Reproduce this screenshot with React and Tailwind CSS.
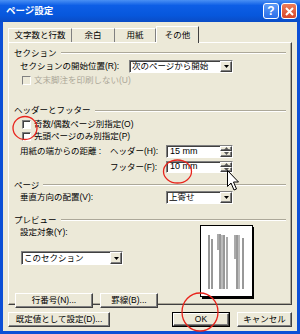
import React from "react"

const sunken =
  "bg-white border border-t-[#808080] border-l-[#808080] border-r-white border-b-white shadow-[inset_1px_1px_0_#404040]"
const raised =
  "bg-[#ece9d8] border border-t-white border-l-white border-r-[#404040] border-b-[#404040] shadow-[inset_-1px_-1px_0_#808080]"

function Group({ label }) {
  return (
    <div className="flex items-center h-[12px] px-[5px]">
      <span>{label}</span>
      <div className="flex-1 ml-[4px] h-[2px] border-t border-t-[#aca899] border-b border-b-white" />
    </div>
  )
}

function Arrow() {
  return (
    <svg width="5" height="3" viewBox="0 0 5 3">
      <path d="M0 0h5L2.5 3z" fill="#000" />
    </svg>
  )
}

function Select({ value, w }) {
  return (
    <div className={`${sunken} ${w} h-full flex items-center`}>
      <span className="flex-1 pl-[2px] leading-none">{value}</span>
      <div className={`${raised} w-[12px] h-full flex items-center justify-center`}>
        <Arrow />
      </div>
    </div>
  )
}

function Spin({ value }) {
  return (
    <div className={`${sunken} w-[67px] h-full flex items-center`}>
      <span className="flex-1 pl-[3px] leading-none text-[9px]">{value}</span>
      <div className="w-[12px] h-full flex flex-col">
        <div className={`${raised} flex-1 flex items-center justify-center`}>
          <svg width="5" height="3" viewBox="0 0 5 3">
            <path d="M0 3h5L2.5 0z" fill="#555" />
          </svg>
        </div>
        <div className={`${raised} flex-1 flex items-center justify-center`}>
          <svg width="5" height="3" viewBox="0 0 5 3">
            <path d="M0 0h5L2.5 3z" fill="#555" />
          </svg>
        </div>
      </div>
    </div>
  )
}

function Check({ label, disabled }) {
  return (
    <div className={`flex items-center h-[12px] pl-[13px] ${disabled ? "text-[#aca899]" : ""}`}>
      <div
        className={`w-[9px] h-[9px] border border-t-[#808080] border-l-[#808080] border-r-white border-b-white ${
          disabled ? "bg-[#ece9d8]" : "bg-white shadow-[inset_1px_1px_0_#404040]"
        }`}
      />
      <span className="ml-[3px]">{label}</span>
    </div>
  )
}

function Button({ label, w, def }) {
  return (
    <div
      className={`${w} h-[15px] flex items-center justify-center ${
        def ? "border border-black" : ""
      }`}
    >
      <div className={`${raised} w-full h-full flex items-center justify-center leading-none`}>
        {label}
      </div>
    </div>
  )
}

function Preview() {
  const lines = [
    [9, 10, 64, "#333"],
    [12, 14, 64, "#333"],
    [18, 9, 25, "#555"],
    [20, 9, 64, "#333"],
    [22, 10, 64, "#777"],
    [24, 10, 64, "#333"],
    [27, 12, 64, "#555"],
    [35, 10, 34, "#555"],
    [37, 10, 64, "#333"],
    [39, 10, 64, "#777"],
    [43, 13, 64, "#333"],
  ]
  return (
    <svg width="55" height="74" viewBox="0 0 55 74">
      <rect x="2" y="2" width="52" height="72" fill="#000" />
      <rect x="0.5" y="0.5" width="52" height="71" fill="#fff" stroke="#000" />
      {lines.map(([x, y1, y2, c], i) => (
        <line key={i} x1={x} y1={y1} x2={x} y2={y2} stroke={c} strokeWidth="1" />
      ))}
    </svg>
  )
}

export default function App() {
  return (
    <div className="relative w-[300px] h-[334px] bg-[#0c4fd6] font-['Liberation_Sans','Noto_Sans_CJK_JP',sans-serif] text-[8.5px] text-black overflow-hidden">
      <div className="h-[22px] flex items-center pl-[6px] pr-[3px] bg-[linear-gradient(to_bottom,#4a90f4,#0d5ee6_25%,#0757dc_70%,#0a4cc6)]">
        <span className="text-white font-bold text-[9.5px] flex-1">ページ設定</span>
        <div className="w-[16px] h-[16px] rounded-[3px] border border-white bg-[linear-gradient(to_bottom,#5d9bf7,#2a6ee9)] flex items-center justify-center text-white font-bold text-[12px] leading-none">
          ?
        </div>
        <div className="ml-[2px] w-[16px] h-[16px] rounded-[3px] border border-white bg-[linear-gradient(to_bottom,#ec7c5a,#d6472b)] flex items-center justify-center">
          <svg width="9" height="9" viewBox="0 0 9 9">
            <path d="M1 1l7 7M8 1L1 8" stroke="#fff" strokeWidth="2" />
          </svg>
        </div>
      </div>

      <div className="mx-[3px] h-[309px] bg-[#ece9d8] pt-[4px] px-[5px] flex flex-col">
        <div className="flex items-end h-[16px]">
          <div className="w-[64px] h-[14px] flex items-center justify-center border-t border-l border-t-white border-l-white border-r border-r-[#808080]">
            文字数と行数
          </div>
          <div className="w-[43px] h-[14px] flex items-center justify-center border-t border-t-white border-r border-r-[#808080]">
            余白
          </div>
          <div className="w-[41px] h-[14px] flex items-center justify-center border-t border-t-white border-r border-r-[#808080]">
            用紙
          </div>
          <div className="w-[43px] h-[17px] -mb-px z-10 bg-[#ece9d8] flex items-center justify-center border-t border-l border-t-white border-l-white border-r border-r-[#404040]">
            その他
          </div>
        </div>

        <div className="h-[263px] border border-t-white border-l-white border-r-[#404040] border-b-[#404040] shadow-[inset_-1px_-1px_0_#aca899] flex flex-col">
          <div className="mt-[4px]">
            <Group label="セクション" />
          </div>
          <div className="mt-[1px] h-[15px] flex items-center pl-[11px]">
            <span className="w-[109px]">セクションの開始位置(R):</span>
            <Select value="次のページから開始" w="w-[104px]" />
          </div>
          <div className="mt-[2px]">
            <Check label="文末脚注を印刷しない(U)" disabled />
          </div>

          <div className="mt-[18px]">
            <Group label="ヘッダーとフッター" />
          </div>
          <div className="mt-[2px]">
            <Check label="奇数/偶数ページ別指定(O)" />
          </div>
          <Check label="先頭ページのみ別指定(P)" />
          <div className="mt-[2px] h-[13px] flex items-center pl-[11px]">
            <span className="w-[90px]">用紙の端からの距離 :</span>
            <span className="w-[56px]">ヘッダー(H):</span>
            <Spin value="15 mm" />
          </div>
          <div className="mt-[3px] h-[13px] flex items-center pl-[101px]">
            <span className="w-[56px]">フッター(F):</span>
            <Spin value="10 mm" />
          </div>

          <div className="mt-[6px]">
            <Group label="ページ" />
          </div>
          <div className="h-[13px] flex items-center pl-[11px]">
            <span className="w-[146px]">垂直方向の配置(V):</span>
            <Select value="上寄せ" w="w-[67px]" />
          </div>

          <div className="mt-[10px]">
            <Group label="プレビュー" />
          </div>
          <div className="flex">
            <div className="w-[191px] pl-[6px] flex flex-col">
              <div className="h-[10px] flex items-center pl-[5px] mt-[1px]">設定対象(Y):</div>
              <div className="mt-[14px] h-[14px] pl-[6px]">
                <Select value="このセクション" w="w-[102px]" />
              </div>
              <div className="mt-[28px] flex gap-[7px]">
                <Button label="行番号(N)..." w="w-[78px]" />
                <Button label="罫線(B)..." w="w-[58px]" />
              </div>
            </div>
            <div className="mt-[-1px]">
              <Preview />
            </div>
          </div>
        </div>

        <div className="mt-[7px] flex gap-[7px]">
          <Button label="既定値として設定(D)..." w="w-[102px]" />
          <div className="ml-auto">
            <Button label="OK" w="w-[58px]" def />
          </div>
          <Button label="キャンセル" w="w-[55px]" />
        </div>
      </div>

      <svg className="absolute inset-0 pointer-events-none" width="300" height="334" viewBox="0 0 300 334">
        <ellipse cx="25" cy="128" rx="12" ry="11.5" fill="none" stroke="#e8241c" strokeWidth="1.3" />
        <ellipse cx="177.5" cy="171.5" rx="14" ry="11.5" fill="none" stroke="#e8241c" strokeWidth="1.3" />
        <ellipse cx="200" cy="312" rx="18" ry="19" fill="none" stroke="#e8241c" strokeWidth="1.3" />
        <path
          d="M227.5 170.5v16l3.5-3.5 3 7 2.5-1-3-7h5z"
          fill="#fff"
          stroke="#000"
          strokeWidth="1"
          strokeLinejoin="round"
        />
      </svg>
    </div>
  )
}
